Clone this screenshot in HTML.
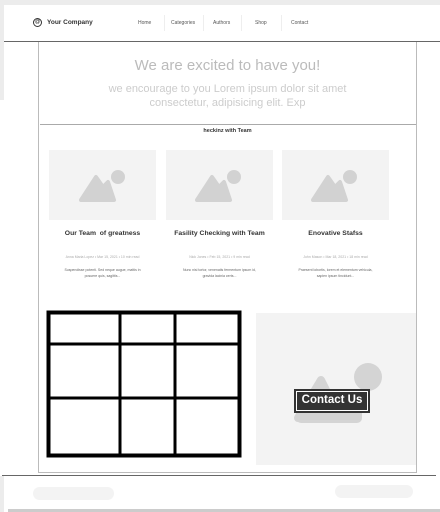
<!DOCTYPE html>
<html><head><style>
*{margin:0;padding:0;box-sizing:border-box}
body{width:440px;height:512px;background:#fff;font-family:"Liberation Sans",sans-serif;position:relative;overflow:hidden}
.a{position:absolute}
.nav a{position:absolute;top:20px;font-size:5px;color:#555}
.sep{position:absolute;top:15px;width:1px;height:16px;background:#eee}
.card{position:absolute;top:150px;width:107px;height:70px;background:#f3f3f3}
.t{position:absolute;top:230px;font-size:6.8px;font-weight:bold;color:#333;text-align:center;width:107px}
.m{position:absolute;top:255px;font-size:3.5px;color:#aaa;text-align:center;width:107px}
.d{position:absolute;top:267px;font-size:3.5px;color:#666;text-align:center;width:107px;line-height:6px}
</style></head><body>
<div class="a" style="left:0;top:0;width:440px;height:5px;background:#ececec"></div>
<div class="a" style="left:0;top:5px;width:4px;height:95px;background:#ececec"></div>
<div class="a" style="left:4px;top:5px;width:436px;height:37px;background:#fff;border-bottom:1px solid #666"></div>
<div class="a" style="left:33px;top:18px;width:9px;height:9px;border:1.3px solid #333;border-radius:50%;font-size:5px;text-align:center;line-height:6px">@</div>
<div class="a" style="left:47px;top:19px;font-size:6.5px;font-weight:bold;color:#333">Your Company</div>
<div class="nav"><a style="left:138px">Home</a><a style="left:171px">Categories</a><a style="left:213px">Authors</a><a style="left:255px">Shop</a><a style="left:291px">Contact</a></div>
<div class="sep" style="left:164px"></div><div class="sep" style="left:203px"></div><div class="sep" style="left:241px"></div><div class="sep" style="left:281px"></div>
<div class="a" style="left:38px;top:42px;width:379px;height:431px;border:1px solid #bbb;border-top:none"></div>
<div class="a" style="left:38px;top:57px;width:379px;text-align:center;font-size:15px;color:#bbb">We are excited to have you!</div>
<div class="a" style="left:38px;top:82px;width:379px;text-align:center;font-size:11px;color:#ccc;line-height:14px">we encourage to you Lorem ipsum dolor sit amet<br>consectetur, adipisicing elit. Exp</div>
<div class="a" style="left:40px;top:124px;width:376px;height:1px;background:#aaa"></div>
<div class="a" style="left:38px;top:128px;width:379px;text-align:center;font-size:5.5px;font-weight:bold;color:#333">heckinz with Team</div>
<div class="card" style="left:49px"></div><div class="card" style="left:166px"></div><div class="card" style="left:282px"></div>
<svg class="a" style="left:0;top:0" width="440" height="512">
<g fill="#d2d2d2">
<circle cx="118" cy="177" r="7"/><path d="M81 200 L96 177 L103 187 L108 182 L114 200 Z" stroke="#d2d2d2" stroke-width="4" stroke-linejoin="round"/>
<circle cx="234" cy="177" r="7"/><path d="M197 200 L212 177 L219 187 L224 182 L230 200 Z" stroke="#d2d2d2" stroke-width="4" stroke-linejoin="round"/>
<circle cx="350" cy="177" r="7"/><path d="M313 200 L328 177 L335 187 L340 182 L346 200 Z" stroke="#d2d2d2" stroke-width="4" stroke-linejoin="round"/>
</g></svg>
<div class="t" style="left:49px">Our Team &nbsp;of greatness</div>
<div class="t" style="left:166px">Fasility Checking with Team</div>
<div class="t" style="left:282px">Enovative Stafss</div>
<div class="m" style="left:49px">Anna Maria Lopez • Mar 15, 2021 • 10 min read</div>
<div class="m" style="left:166px">Nick Jones • Feb 15, 2021 • 9 min read</div>
<div class="m" style="left:282px">John Mason • Mar 18, 2021 • 18 min read</div>
<div class="d" style="left:49px">Suspendisse potenti. Sed neque augue, mattis in<br>posuere quis, sagittis...</div>
<div class="d" style="left:166px">Nunc nisi tortor, venenatis fermentum ipsum id,<br>gravida lacinia certs...</div>
<div class="d" style="left:282px">Praesent lobortis, lorem et elementum vehicula,<br>sapien ipsum tincidunt...</div>
<div class="a" style="left:256px;top:313px;width:160px;height:152px;background:#f3f3f3"></div>
<svg class="a" style="left:0;top:0" width="440" height="512"><g fill="#d4d4d4"><circle cx="368" cy="377" r="14"/><path d="M298 418 L321 380 L340 418 Z" stroke="#d4d4d4" stroke-width="8" stroke-linejoin="round"/><rect x="296" y="405" width="66" height="18" rx="5"/></g>
<rect x="48.5" y="312.5" width="191" height="143" fill="#fff" stroke="#000" stroke-width="4"/>
<path d="M120 312V456M175 312V456M48 344H240M48 398H240" stroke="#000" stroke-width="3"/></svg>
<div class="a" style="left:294px;top:389px;width:76px;height:24px;background:#333;padding:2px"><div style="border:1px solid #fff;height:100%;color:#fff;font-weight:bold;font-size:11.5px;text-align:center;line-height:17px">Contact Us</div></div>
<div class="a" style="left:2px;top:475px;width:434px;height:1px;background:#666"></div>
<div class="a" style="left:0;top:476px;width:4px;height:36px;background:#ececec"></div>
<div class="a" style="left:33px;top:487px;width:81px;height:13px;border-radius:7px;background:#f3f3f3"></div>
<div class="a" style="left:335px;top:485px;width:78px;height:13px;border-radius:7px;background:#f3f3f3"></div>
<div class="a" style="left:8px;top:509px;width:432px;height:3px;background:#ccc"></div>
</body></html>
